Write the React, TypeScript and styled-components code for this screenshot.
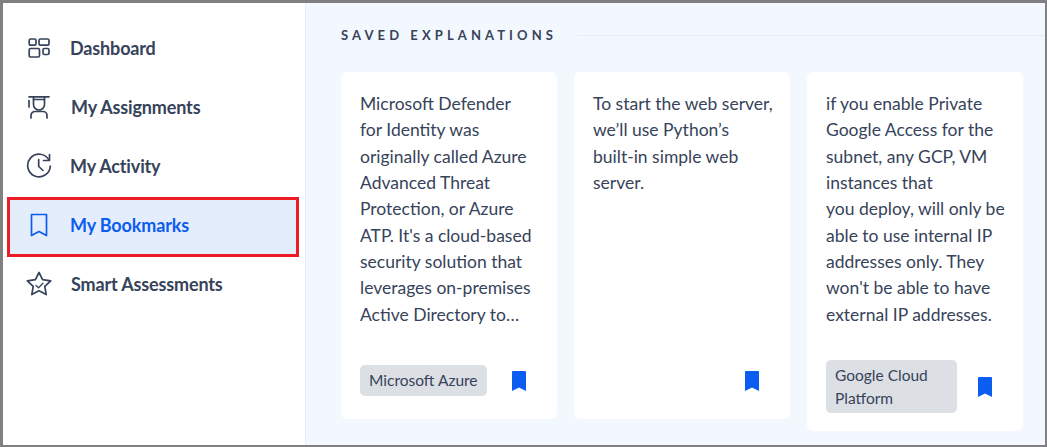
import React from "react";
import styled, { createGlobalStyle } from "styled-components";

const GlobalStyle = createGlobalStyle`
  html, body {
    margin: 0;
    padding: 0;
    background: #808080;
  }
  * {
    box-sizing: border-box;
  }
`;

const Frame = styled.div`
  display: flex;
  width: 1047px;
  height: 447px;
  border: 3px solid #808080;
  border-right-width: 2px;
  border-bottom-width: 2px;
  overflow: hidden;
  background: #f3f7fe;
  font-family: "Lato", "Liberation Sans", sans-serif;
`;

const Sidebar = styled.nav`
  display: flex;
  flex-direction: column;
  flex: 0 0 303px;
  padding: 17px 0 0 4px;
  background: #ffffff;
  border-right: 1px solid #e9edf3;
`;

const NavItem = styled.a<{ $active?: boolean }>`
  display: flex;
  align-items: center;
  flex: none;
  width: 292px;
  height: ${(props) => (props.$active ? "60px" : "59px")};
  margin-bottom: ${(props) => (props.$active ? "-1px" : "0")};
  padding: 0 0 ${(props) => (props.$active ? "4px" : "3px")} 18px;
  color: ${(props) => (props.$active ? "#0b5cf0" : "#36435a")};
  background: ${(props) => (props.$active ? "#e4edfc" : "transparent")};
  border: 3px solid ${(props) => (props.$active ? "#ed1c24" : "transparent")};
  font-size: 18px;
  font-weight: 700;
  letter-spacing: -0.15px;
`;

const NavIcon = styled.span`
  display: flex;
  justify-content: center;
  flex: 0 0 42px;
  min-width: 0;
  padding-right: 21px;
`;

const NavLabel = styled.span<{ $nudge?: boolean }>`
  margin-left: ${(props) => (props.$nudge ? "1px" : "0")};
`;

const Main = styled.main`
  flex: 1;
  min-width: 0;
  padding: 23px 0 0 35px;
`;

const SectionHeader = styled.div`
  display: flex;
  align-items: center;
  gap: 20px;
  margin-bottom: 28px;
`;

const SectionTitle = styled.h2`
  margin: 0;
  color: #36435a;
  font-size: 13px;
  line-height: 18px;
  font-weight: 700;
  letter-spacing: 4.1px;
  white-space: nowrap;
`;

const SectionRule = styled.div`
  flex: 1;
  height: 1px;
  background: #e9edf3;
`;

const CardRow = styled.div`
  display: grid;
  grid-template-columns: repeat(3, 216px);
  gap: 17px;
  align-items: start;
`;

const Card = styled.article`
  display: flex;
  flex-direction: column;
  min-height: 347px;
  padding: 19px 19px 18px;
  background: #ffffff;
  border-radius: 6px;
`;

const CardText = styled.p`
  margin: 0 0 32px;
  min-height: 237px;
  color: #36435a;
  font-size: 17.5px;
  line-height: 26.33px;
  white-space: pre;
`;

const CardFooter = styled.div`
  display: flex;
  align-items: center;
  min-height: 41px;
  padding-right: 12px;
`;

const Tag = styled.span`
  max-width: 131px;
  padding: 4px 9px;
  color: #36435a;
  background: #dcdfe4;
  border-radius: 5px;
  font-size: 15.5px;
  line-height: 22.5px;
`;

const OutlineSvg = styled.svg`
  display: block;
  flex: none;
  fill: none;
  stroke: currentColor;
  stroke-width: 1.7;
  stroke-linecap: round;
  stroke-linejoin: round;
`;

const BookmarkGlyph = styled.svg`
  display: block;
  flex: none;
  margin-left: auto;
  fill: #0b5cf0;
`;

const DashboardIcon = () => (
  <OutlineSvg width="22" height="20" viewBox="0 0 22 20">
    <rect x="1.2" y="1" width="6.8" height="6.2" rx="1.4" />
    <rect x="11" y="1" width="10" height="6.2" rx="1.4" />
    <rect x="1.2" y="10.5" width="10.3" height="8.5" rx="1.4" />
    <rect x="15" y="10.5" width="6" height="6" rx="1.4" />
  </OutlineSvg>
);

const AssignmentIcon = () => (
  <OutlineSvg width="22" height="24" viewBox="0 0 22 24">
    <path d="M1 1.8h20" />
    <path d="M1 5.5V12" />
    <path d="M5.5 4.5h11" />
    <path d="M5.5 2v7.5a5.5 5.5 0 0 0 11 0V2" />
    <path d="M3 23v-2.5a4 4 0 0 1 4-4h8a4 4 0 0 1 4 4V23" />
  </OutlineSvg>
);

const ActivityIcon = () => (
  <OutlineSvg width="26" height="26" viewBox="0 0 26 26">
    <path d="M23 7.2A11.3 11.3 0 1 0 24.3 13" />
    <path d="M23.5 1.5v6h-6" />
    <path d="M12.7 6.5v7l4.3 4" />
  </OutlineSvg>
);

const BookmarkOutlineIcon = () => (
  <OutlineSvg width="18" height="24" viewBox="0 0 18 24">
    <path d="M1.5 1.5h15v21L9 18.5l-7.5 4z" />
  </OutlineSvg>
);

const StarIcon = () => (
  <OutlineSvg width="26" height="26" viewBox="0 0 26 26">
    <path d="M13 1.5l3.6 7.1 8.1 1.2-5.9 5.6 1.4 8.2-7.2-3.8-7.2 3.8 1.4-8.2-5.9-5.6 8.1-1.2z" />
    <path d="M10 14.5l2.5 2.3 4.5-4.5" strokeWidth="1.3" />
  </OutlineSvg>
);

const BookmarkFilled = () => (
  <BookmarkGlyph width="14" height="20" viewBox="0 0 14 20">
    <path d="M0 1a1 1 0 0 1 1-1h12a1 1 0 0 1 1 1v19l-7-3.4L0 20z" />
  </BookmarkGlyph>
);

const navItems = [
  { label: "Dashboard", icon: <DashboardIcon /> },
  { label: "My Assignments", icon: <AssignmentIcon />, nudge: true },
  { label: "My Activity", icon: <ActivityIcon /> },
  { label: "My Bookmarks", icon: <BookmarkOutlineIcon />, active: true },
  { label: "Smart Assessments", icon: <StarIcon />, nudge: true },
];

const explanations = [
  {
    text: "Microsoft Defender\nfor Identity was\noriginally called Azure\nAdvanced Threat\nProtection, or Azure\nATP. It's a cloud-based\nsecurity solution that\nleverages on-premises\nActive Directory to…",
    tag: "Microsoft Azure",
  },
  {
    text: "To start the web server,\nwe’ll use Python’s\nbuilt-in simple web\nserver.",
  },
  {
    text: "if you enable Private\nGoogle Access for the\nsubnet, any GCP, VM\ninstances that\nyou deploy, will only be\nable to use internal IP\naddresses only. They\nwon't be able to have\nexternal IP addresses.",
    tag: "Google Cloud Platform",
  },
];

const App = () => {
  return (
    <>
      <GlobalStyle />
      <Frame>
        <Sidebar>
          {navItems.map((item) => (
            <NavItem key={item.label} $active={item.active}>
              <NavIcon>{item.icon}</NavIcon>
              <NavLabel $nudge={item.nudge}>{item.label}</NavLabel>
            </NavItem>
          ))}
        </Sidebar>
        <Main>
          <SectionHeader>
            <SectionTitle>SAVED EXPLANATIONS</SectionTitle>
            <SectionRule />
          </SectionHeader>
          <CardRow>
            {explanations.map((item) => (
              <Card key={item.text}>
                <CardText>{item.text}</CardText>
                <CardFooter>
                  {item.tag && <Tag>{item.tag}</Tag>}
                  <BookmarkFilled />
                </CardFooter>
              </Card>
            ))}
          </CardRow>
        </Main>
      </Frame>
    </>
  );
};

export default App;
